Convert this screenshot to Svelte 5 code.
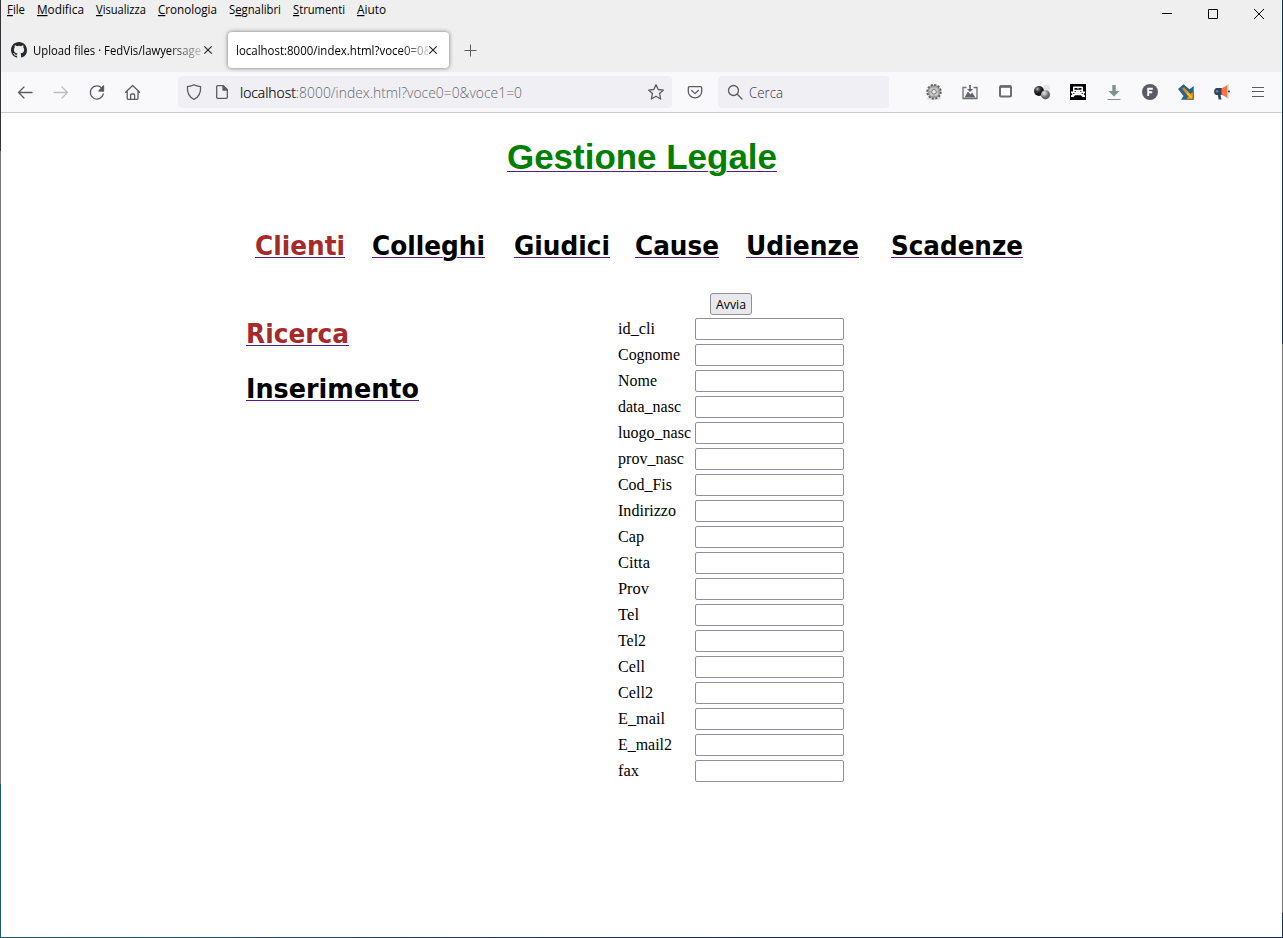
<script>
  const menus = [
    { a: '', k: 'F', b: 'ile', w: 18 },
    { a: '', k: 'M', b: 'odifica', w: 47 },
    { a: '', k: 'V', b: 'isualizza', w: 50 },
    { a: '', k: 'C', b: 'ronologia', w: 59 },
    { a: 'S', k: 'e', b: 'gnalibri', w: 52 },
    { a: '', k: 'S', b: 'trumenti', w: 52 },
    { a: '', k: 'A', b: 'iuto', w: 29 }
  ];
  const sections = [
    { name: 'Clienti', left: 0, w: 90 },
    { name: 'Colleghi', left: 27, w: 113 },
    { name: 'Giudici', left: 29, w: 96 },
    { name: 'Cause', left: 25, w: 84 },
    { name: 'Udienze', left: 27, w: 113 },
    { name: 'Scadenze', left: 32, w: 132 }
  ];
  const fields = [
    ['id_cli', 37], ['Cognome', 62], ['Nome', 39], ['data_nasc', 63], ['luogo_nasc', 73],
    ['prov_nasc', 66], ['Cod_Fis', 54], ['Indirizzo', 58], ['Cap', 26], ['Citta', 32],
    ['Prov', 31], ['Tel', 21], ['Tel2', 28], ['Cell', 27], ['Cell2', 35],
    ['E_mail', 47], ['E_mail2', 54], ['fax', 21]
  ];
</script>

{#snippet link(text, w, size, base, gap, color)}
  <svg class="link" width={w} height="39" style:fill={color} style:font-size="{size}px">
    <path d="M0 {base + gap + 0.5}H{w}" />
    <text x="0" y={base} textLength={w} lengthAdjust="spacingAndGlyphs">{text}</text>
  </svg>
{/snippet}

<div class="window">
  <header>
    <div class="menubar">
      <nav>
        {#each menus as m}
          <svg width={m.w} height="20"><text x="0" y="14" textLength={m.w} lengthAdjust="spacingAndGlyphs">{m.a}<tspan class="key">{m.k}</tspan>{m.b}</text></svg>
        {/each}
      </nav>
      <div class="controls">
        <svg width="10" height="10" viewBox="0 0 10 10"><path d="M0 4.500h10" /></svg>
        <svg width="10" height="10" viewBox="0 0 10 10"><path d="M.5.5h9v9h-9z" /></svg>
        <svg width="10" height="10" viewBox="0 0 10 10"><path d="M0 0l10 10M10 0L0 10" /></svg>
      </div>
    </div>
    <div class="tabs">
      <div class="tab first">
        <svg width="16" height="16" viewBox="0 0 16 16"><path fill="#24292f" d="M8 0C3.58 0 0 3.58 0 8c0 3.54 2.29 6.53 5.47 7.59.4.07.55-.17.55-.38v-1.49c-2.01.37-2.53-.49-2.69-.94-.09-.23-.48-.94-.82-1.13-.28-.15-.68-.52-.01-.53.63-.01 1.08.58 1.23.82.72 1.21 1.87.87 2.33.66.07-.52.28-.87.51-1.07-1.78-.2-3.64-.89-3.64-3.95 0-.87.31-1.59.82-2.15-.08-.2-.36-1.02.08-2.12 0 0 .67-.21 2.2.82a7.6 7.6 0 0 1 4 0c1.53-1.04 2.2-.82 2.2-.82.44 1.1.16 1.92.08 2.12.51.56.82 1.27.82 2.15 0 3.07-1.87 3.75-3.65 3.95.29.25.54.73.54 1.48v2.2c0 .21.15.46.55.38A8 8 0 0 0 16 8c0-4.42-3.58-8-8-8z" /></svg>
        <div class="title t1"><svg width="168" height="20"><text x="0" y="15" textLength="168" lengthAdjust="spacingAndGlyphs">Upload files · FedVis/lawyersage</text></svg></div>
        <svg class="x" width="8" height="8" viewBox="0 0 8 8"><path d="M.3.3l7.400 7.400M7.700.3L.3 7.700" /></svg>
      </div>
      <div class="tab active">
        <div class="title t2"><svg width="196" height="20"><text x="0" y="15" textLength="196" lengthAdjust="spacingAndGlyphs">localhost:8000/index.html?voce0=0&amp;</text></svg></div>
        <svg class="x" width="8" height="8" viewBox="0 0 8 8"><path d="M.3.3l7.400 7.400M7.700.3L.3 7.700" /></svg>
      </div>
      <svg class="plus" width="13" height="13" viewBox="0 0 13 13"><path d="M6.500.5v12M.5 6.500h12" /></svg>
    </div>
    <div class="toolbar">
      <div class="navigation">
        <svg class="line" width="16" height="16" viewBox="0 0 16 16"><path d="M15 8.500H1.500M7 3L1.500 8.500 7 14" /></svg>
        <svg class="line dim" width="16" height="16" viewBox="0 0 16 16"><path d="M1 8.500h13.500M9 3l5.500 5.500L9 14" /></svg>
        <svg class="line" width="16" height="16" viewBox="0 0 16 16"><path d="M14.300 10A6.600 6.600 0 1 1 12.700 4" /><path class="solid" d="M14.500 2V7H10z" /></svg>
        <svg class="line" width="16" height="16" viewBox="0 0 16 16"><path d="M.6 8.300L7.600 1.500l7 6.800M2.200 7v7.300q0 1 1 1h8.800q1 0 1-1V7M5.600 15v-4q0-1 1-1h2q1 0 1 1v4" /></svg>
      </div>
      <div class="address">
        <svg class="line" width="16" height="16" viewBox="0 0 16 16"><path d="M8 .7C6 2 3.500 2.400 1.400 2.700c-.3 5.800 1.200 10.200 6.600 12.600 5.400-2.400 6.900-6.800 6.600-12.600C12.500 2.400 10 2 8 .7z" /></svg>
        <svg class="line page" width="12" height="14" viewBox="0 0 12 14"><path d="M7.300.7H1.500Q.7.7.7 1.500v11q0 .8.8.8h9q.8 0 .8-.8V4.700z" /><path class="solid" d="M7 .7V5h4.300z" /></svg>
        <svg class="url" width="283" height="24"><text x="0" y="18" textLength="282" lengthAdjust="spacingAndGlyphs"><tspan class="host">localhost</tspan>:8000/index.html?voce0=0&amp;voce1=0</text></svg>
        <svg class="line star" width="16" height="16" viewBox="0 0 16 16"><path d="M8 .8l2.200 4.700 5.200.6-3.800 3.500 1 5.400L8 12.300 3.400 15l1-5.400L.6 6.100l5.200-.6z" /></svg>
      </div>
      <svg class="line pocket" width="16" height="16" viewBox="0 0 16 16"><path d="M2.500 2.700h11q1.200 0 1.200 1.200V7.500a6.700 6.300 0 0 1-13.400 0V3.900q0-1.200 1.200-1.200zM4.700 6.500L8 9.600l3.300-3.100" /></svg>
      <div class="search">
        <svg class="line" width="16" height="16" viewBox="0 0 16 16"><circle cx="6.500" cy="6.500" r="5" /><path d="M10.300 10.300L15 15" /></svg>
        <svg class="cerca" width="34" height="24"><text x="0" y="18" textLength="34" lengthAdjust="spacingAndGlyphs">Cerca</text></svg>
      </div>
      <div class="extensions">
        <svg width="16" height="16" viewBox="0 0 16 16">
          <ellipse cx="8" cy="14.700" rx="7.500" ry="1.300" fill="#ddd" />
          <circle cx="8" cy="7.800" r="6.700" fill="#aaa" stroke="#686868" stroke-width="2.200" stroke-dasharray="2.200 1.300" />
          <circle cx="8" cy="7.800" r="5.300" fill="#c9c9c9" stroke="#999" /><circle cx="8" cy="7.800" r="2.300" fill="#eee" stroke="#777" /><path d="M8 3v2M8 11v2M3 8h2M11 8h2" stroke="#999" />
        </svg>
        <svg width="16" height="16" viewBox="0 0 16 16"><path d="M4.500 3.500H1v11h14v-11h-3.500" fill="none" stroke="#6d6e78" stroke-width="1.300" /><path d="M2.500 13.500L6 7.500l2.500 3 1.500-2 3.500 5zM7.200 1h1.700v4h2.200L8 8 5 5h2.200z" fill="#626370" /></svg>
        <svg width="16" height="16" viewBox="0 0 16 16"><rect x="2" y="2.250" width="11" height="10.250" rx="1" fill="#fff" stroke="#6c6c6c" stroke-width="2" /><path d="M2 2.500h11" stroke="#6c6c6c" stroke-width="2.600" /></svg>
        <svg width="16" height="16" viewBox="0 0 16 16">
          <defs><radialGradient id="darkball" cx=".35" cy=".3"><stop stop-color="#bbb" /><stop offset=".45" stop-color="#444" /><stop offset="1" stop-color="#111" /></radialGradient><radialGradient id="greyball" cx=".35" cy=".3"><stop stop-color="#eee" /><stop offset=".5" stop-color="#aaa" /><stop offset="1" stop-color="#666" /></radialGradient></defs>
          <circle cx="12.500" cy="4" r="3.500" fill="#e6e6e7" /><circle cx="5" cy="7" r="5" fill="url(#darkball)" /><circle cx="11.500" cy="10.800" r="4.600" fill="url(#greyball)" />
        </svg>
        <svg width="16" height="16" viewBox="0 0 16 16"><path fill="#000" d="M0 0h16v16H0z" /><path fill="#fff" d="M4 2.500h8q1 0 1 1V8H3V3.500q0-1 1-1zM1 7.500h14v1.300L13.500 10l1.500 1.500V13h-2.500L11 11.300H5L3.500 13H1v-1.500L2.500 10 1 8.800z" /><path fill="#000" d="M4.500 4h7v1.800h-7zM4.500 7h1.500v.8H4.500zM10 7h1.500v.8H10zM3 9.200h1.500v.8H3zM11.500 9.200H13v.8h-1.500z" /><path fill="#fff" d="M7.500 4h1v1h-1z" /></svg>
        <svg width="16" height="16" viewBox="0 0 16 16"><path fill="#7c9190" d="M6.300 1h3.400v6H13.500L8 12.500 2.500 7h3.800zM1.500 15h13v1h-13z" /></svg>
        <svg width="16" height="16" viewBox="0 0 16 16"><circle cx="8" cy="8" r="8" fill="#5b5b66" /><path d="M6.200 12V4.700h4.600M6.200 8.300h4" fill="none" stroke="#fff" stroke-width="1.900" /></svg>
        <svg width="16" height="16" viewBox="0 0 16 16">
          <defs><linearGradient id="amber" x2="1" y2="1"><stop stop-color="#b98a48" /><stop offset="1" stop-color="#ff9f05" /></linearGradient></defs>
          <path d="M0 5L5.500.2l6 5L15.700 2v13.700H3L5.500 12z" fill="#23668d" /><path d="M3.500 4.500L6 3l6.500 6.500 2.700-2v7.700H8l2-2.700z" fill="url(#amber)" stroke="#4c5547" stroke-width=".6" /><path d="M9 9l4.500 4.500" stroke="#ffc13a" stroke-width="1.400" />
        </svg>
        <svg width="16" height="16" viewBox="0 0 16 16"><path fill="#2e4560" d="M2 4h6v7H6.500l1 4.500H4.700L3.800 11H2Q0 10 0 7.500T2 4z" /><circle cx="3" cy="7.200" r="1.300" fill="#6e8194" /><path fill="#ff7043" d="M7.500 4.500L13.500 1v13l-6-3.500z" /><path d="M14 .5v14" stroke="#a9d9ef" stroke-width="1.300" /><circle cx="15" cy="7.500" r="1.100" fill="#2e4560" /></svg>
        <svg width="16" height="16" viewBox="0 0 16 16"><path d="M2 3.500h12M2 7.500h12M2 12.500h12" stroke="#5b5b66" /></svg>
      </div>
    </div>
  </header>

  <main>
    <h1><a href="#home">{@render link('Gestione Legale', 270, 35, 32, 2, '#008000')}</a></h1>
    <nav class="sections">
      {#each sections as s, i}
        <a href="#{s.name}" style:margin-left="{s.left}px">{@render link(s.name, s.w, 26, 23, 2, i ? '#000' : '#a52a2a')}</a>
      {/each}
    </nav>
    <div class="content">
      <aside>
        <a href="#ricerca">{@render link('Ricerca', 103, 26, 23, 2, '#a52a2a')}</a>
        <a href="#inserimento">{@render link('Inserimento', 173, 26, 23, 2, '#000')}</a>
      </aside>
      <form>
        <button type="button"><svg width="30" height="18"><text x="0" y="14" textLength="30" lengthAdjust="spacingAndGlyphs">Avvia</text></svg></button>
        {#each fields as [name, w]}
          <div class="row">
            <label for={name}><svg width={w} height="22"><text x="0" y="16" textLength={w} lengthAdjust="spacingAndGlyphs">{name}</text></svg></label>
            <input id={name} type="text" />
          </div>
        {/each}
      </form>
    </div>
  </main>
</div>

<style>
  :global(body) { margin: 0; }
  .window {
    box-sizing: border-box; width: 1283px; height: 938px; padding: 0 1px 1px; overflow: hidden; display: flex; flex-direction: column;
    background:
      linear-gradient(#333 151px, #77747a 151px 784px, #1f566b 784px) left / 1px 100% no-repeat,
      linear-gradient(#1b305c 344px, #707070 344px 913px, #1b305c 913px) right / 1px 100% no-repeat,
      linear-gradient(90deg, #1f566b, #1b305c 60%) bottom / 100% 1px no-repeat, #fff;
  }
  svg { display: block; flex: none; overflow: visible; }
  header { height: 113px; box-sizing: border-box; background: #efefef; border-bottom: 1px solid #ccc; font: 12px "Open Sans", "Noto Sans", sans-serif; color: #000; }
  .menubar { height: 28px; display: flex; justify-content: space-between; }
  .menubar nav { display: flex; gap: 12px; padding-left: 6px; }
  .key { text-decoration: underline; }
  .controls { display: flex; gap: 36px; padding: 9px 18px 0 0; }
  .controls path { fill: none; stroke: #000; }
  .tabs { height: 44px; display: flex; align-items: flex-start; }
  .tab { height: 36px; margin-top: 4px; display: flex; align-items: center; box-sizing: border-box; border-radius: 4px; }
  .first { width: 218px; padding-left: 10px; }
  .active { width: 221px; margin-left: 9px; padding-left: 8px; background: #fff; box-shadow: 0 0 4px #0008; }
  .title { overflow: hidden; }
  .t1 { width: 168px; margin-left: 6px; mask-image: linear-gradient(90deg, #000 80%, #0003); }
  .t2 { width: 192px; mask-image: linear-gradient(90deg, #000 85%, #0003); }
  .x { margin-left: 3px; fill: none; stroke: #222; stroke-width: 1.100; }
  .active .x { margin-left: 1px; }
  .plus { margin: 16px 0 0 15px; stroke: #5b5b66; }
  .toolbar { height: 40px; background: #f9f9fb; display: flex; align-items: center; }
  .line { fill: none; stroke: #5b5b66; stroke-width: 1.300; stroke-linejoin: round; stroke-linecap: round; }
  .line .solid { fill: #5b5b66; }
  .dim { stroke: #bdbdc2; }
  .navigation { display: flex; gap: 20px; padding-left: 16px; }
  .address { width: 494px; height: 32px; margin-left: 37px; background: #f0f0f4; border-radius: 4px; display: flex; align-items: center; box-sizing: border-box; padding: 0 8px; font-size: 14px; font-weight: 300; }
  .page { margin-left: 14px; }
  .url { margin-left: 12px; fill: #66666f; }
  .host { fill: #000; stroke: #000; stroke-width: .2px; }
  .star { margin-left: auto; }
  .pocket { margin-left: 15px; }
  .search { width: 171px; height: 32px; margin-left: 15px; background: #f0f0f4; border-radius: 4px; display: flex; align-items: center; box-sizing: border-box; padding-left: 9px; font-size: 14px; font-weight: 300; }
  .cerca { margin-left: 6px; fill: #33333d; }
  .extensions { display: flex; gap: 20px; margin-left: 37px; }
  main { flex: 1; }
  a { display: block; width: max-content; text-decoration: none; }
  .link path { stroke: #551a8b; }
  .link text { paint-order: stroke; stroke: #fff; stroke-width: 2px; }
  h1 { margin: 24px 0 0; height: 54px; padding-left: 1px; font: bold 35px "Liberation Sans", Arial, sans-serif; display: flex; justify-content: center; }
  .sections { display: flex; padding-left: 254px; margin-top: 41px; height: 39px; font-family: "DejaVu Sans", Verdana, sans-serif; font-weight: bold; }
  .content { display: flex; padding-left: 245px; margin-top: 22px; }
  aside { width: 372px; box-sizing: border-box; padding-top: 27px; display: flex; flex-direction: column; gap: 16px; font-family: "DejaVu Sans", Verdana, sans-serif; font-weight: bold; }
  form { width: 226px; font: 16px "Liberation Serif", "Times New Roman", serif; }
  button { display: flex; align-items: center; justify-content: center; width: 42px; height: 22px; margin: 0 0 3px 92px; padding: 0; box-sizing: border-box; border: 1px solid #8f8f9d; border-radius: 3px; background: #e9e9ed; font: 13px "Open Sans", sans-serif; color: #000; }
  .row { height: 22px; margin-bottom: 4px; display: flex; justify-content: space-between; }
  input { width: 149px; height: 22px; box-sizing: border-box; border: 1px solid #8f8f9d; border-radius: 2px; padding: 1px; background: #fff; }
</style>
